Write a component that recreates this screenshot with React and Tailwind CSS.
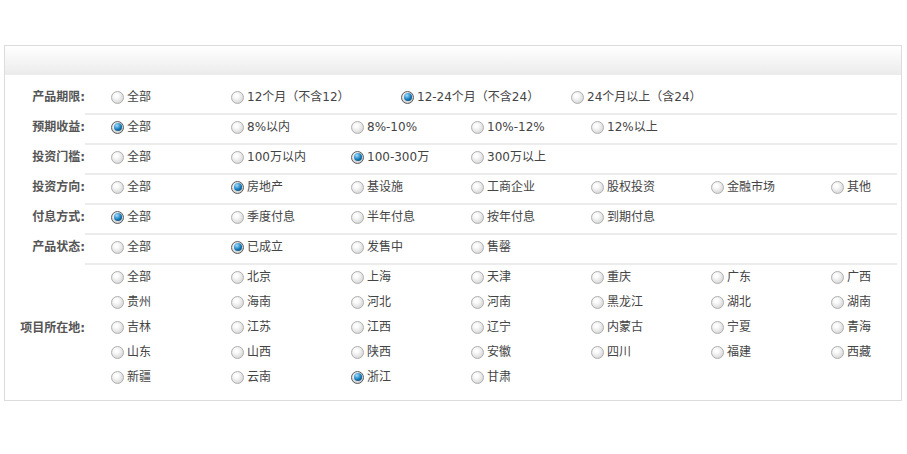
import React from "react";

const FONT = { fontFamily: '"DejaVu Sans", "Noto Sans CJK SC", sans-serif' };

function Radio({ checked }) {
  if (checked) {
    return (
      <span className="flex h-[13px] w-[13px] shrink-0 items-center justify-center rounded-full border border-[#5a5a5a] bg-[radial-gradient(circle_at_40%_35%,#ffffff,#bdbdbd)]">
        <span className="h-[8px] w-[8px] rounded-full bg-[radial-gradient(circle_at_35%_30%,#9fdcff,#1379b8_55%,#06385a)]" />
      </span>
    );
  }
  return (
    <span className="h-[13px] w-[13px] shrink-0 rounded-full border border-[#b0b0b0] bg-[radial-gradient(circle_at_40%_35%,#ffffff_15%,#e6e6e6_55%,#c8c8c8)]" />
  );
}

function Option({ label, checked, w }) {
  return (
    <div className={`flex shrink-0 items-center gap-[3px] ${w}`}>
      <Radio checked={checked} />
      <span className="whitespace-nowrap">{label}</span>
    </div>
  );
}

const rows = [
  {
    label: "产品期限:",
    opts: [
      ["全部", false, "w-[120px]"],
      ["12个月（不含12）", false, "w-[170px]"],
      ["12-24个月（不含24）", true, "w-[170px]"],
      ["24个月以上（含24）", false, ""],
    ],
  },
  {
    label: "预期收益:",
    opts: [
      ["全部", true],
      ["8%以内", false],
      ["8%-10%", false],
      ["10%-12%", false],
      ["12%以上", false],
    ],
  },
  {
    label: "投资门槛:",
    opts: [
      ["全部", false],
      ["100万以内", false],
      ["100-300万", true],
      ["300万以上", false],
    ],
  },
  {
    label: "投资方向:",
    opts: [
      ["全部", false],
      ["房地产", true],
      ["基设施", false],
      ["工商企业", false],
      ["股权投资", false],
      ["金融市场", false],
      ["其他", false, ""],
    ],
  },
  {
    label: "付息方式:",
    opts: [
      ["全部", true],
      ["季度付息", false],
      ["半年付息", false],
      ["按年付息", false],
      ["到期付息", false],
    ],
  },
  {
    label: "产品状态:",
    opts: [
      ["全部", false],
      ["已成立", true],
      ["发售中", false],
      ["售罄", false],
    ],
  },
];

const places = [
  "全部", "北京", "上海", "天津", "重庆", "广东", "广西",
  "贵州", "海南", "河北", "河南", "黑龙江", "湖北", "湖南",
  "吉林", "江苏", "江西", "辽宁", "内蒙古", "宁夏", "青海",
  "山东", "山西", "陕西", "安徽", "四川", "福建", "西藏",
  "新疆", "云南", "浙江", "甘肃",
];

export default function App() {
  return (
    <div className="min-h-[454px] bg-white pt-[45px] text-[12px] leading-[16px]" style={FONT}>
      <div className="ml-[4px] w-[898px] border border-[#dcdcdc] bg-white">
        <div className="h-[29px] bg-[linear-gradient(#ffffff,#ebebeb)]" />
        <div className="pb-[10px] pt-[10px]">
          {rows.map((r) => (
            <div key={r.label} className="flex">
              <div className="w-[80px] shrink-0 pt-[4px] text-right font-bold text-[#555]">
                {r.label}
              </div>
              <div className="mr-[4px] flex h-[30px] flex-1 items-start border-b-2 border-[#ececec] pl-[26px] pt-[4px] text-[#444]">
                {r.opts.map(([l, c, w]) => (
                  <Option key={l} label={l} checked={c} w={w === undefined ? "w-[120px]" : w} />
                ))}
              </div>
            </div>
          ))}
          <div className="flex">
            <div className="flex w-[80px] shrink-0 items-center justify-end font-bold text-[#555]">
              项目所在地:
            </div>
            <div className="mr-[4px] grid flex-1 grid-cols-[repeat(6,120px)_1fr] pl-[26px] text-[#444]">
              {places.map((p) => (
                <div key={p} className="h-[25px] pt-[4px]">
                  <Option label={p} checked={p === "浙江"} w="" />
                </div>
              ))}
            </div>
          </div>
        </div>
      </div>
    </div>
  );
}
